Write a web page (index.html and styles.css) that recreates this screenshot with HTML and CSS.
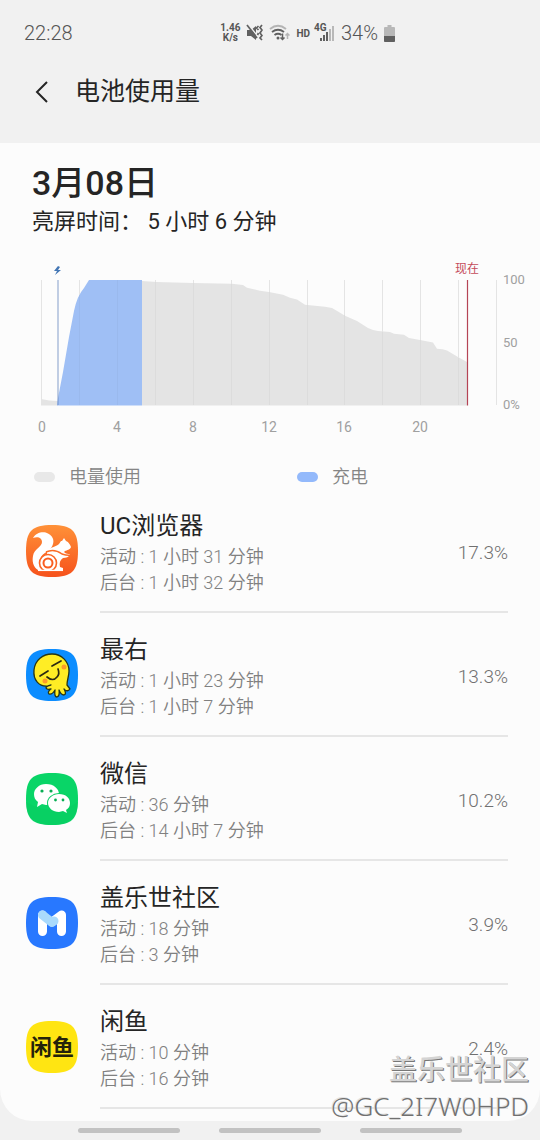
FILE: index.html
```html
<!DOCTYPE html>
<html lang="zh-CN">
<head>
<meta charset="utf-8">
<meta name="viewport" content="width=device-width, initial-scale=1">
<title>电池使用量</title>
<link rel="stylesheet" href="styles.css">
</head>
<body>
<div class="screen">
  <div class="status">
    <span class="clock">22:28</span>
    <div class="indicators">
      <span class="speed">1.46<br>K/s</span>
      <svg viewBox="0 0 17 18" width="17" height="18">
        <path d="M1 6h4l5-4v14l-5-4H1z" fill="#606060"/>
        <path d="M2 0l11 14" stroke="#f1f1f1" stroke-width="1.500"/>
        <path d="M1 1l10 13" stroke="#606060" stroke-width="1.700"/>
        <path d="M12.500 2l-2 2 2 2M16 1l-2 2.500 2 2.500-2 3 2 2.500-2 2.500 2 2M12.500 9l-1 2" fill="none" stroke="#606060" stroke-width="1.700"/>
      </svg>
      <svg viewBox="0 0 21 18" width="21" height="18">
        <g fill="none" stroke-width="1.900">
          <path d="M1 5q8-6.500 16 0" stroke="#b4b4b4"/>
          <path d="M3 8q6-4.500 12 0M5.500 11q3.500-2.500 7 0" stroke="#606060"/>
          <path d="M13.500 9.500v6M11.500 13.500l2 2 2-2" stroke="#606060" stroke-width="1.500"/>
          <path d="M18.500 15V9.500M16.500 11.500l2-2 2 2" stroke="#b4b4b4" stroke-width="1.500"/>
        </g>
        <circle cx="9" cy="14" r="1.500" fill="#606060"/>
      </svg>
      <span class="hd">HD</span>
      <span class="signal">
        <svg viewBox="0 0 19 18" width="19" height="18">
          <path d="M4 14h2v3H4zM7 11h2v6H7zM10 8h2v9h-2z" fill="#606060"/>
          <path d="M13 5h2v12h-2zM16 2h2v15h-2z" fill="#b8b8b8"/>
        </svg>
        <span class="net">4G</span>
      </span>
      <span class="level">34%</span>
      <svg viewBox="0 0 11 17" width="11" height="17">
        <path d="M3.500 0h4v2H10q1 0 1 1v13q0 1-1 1H1q-1 0-1-1V3q0-1 1-1h2.500z" fill="#b8b8b8"/>
        <path d="M0 11h11v5q0 1-1 1H1q-1 0-1-1z" fill="#606060"/>
      </svg>
    </div>
  </div>

  <header class="appbar">
    <button class="back" type="button" aria-label="返回">
      <svg viewBox="0 0 14 22" width="14" height="22"><path d="M12 1L2 11l10 10" fill="none" stroke="#252525" stroke-width="2"/></svg>
    </button>
    <h1>电池使用量</h1>
  </header>

  <main class="card">
    <h2>3月08日</h2>
    <p class="summary">亮屏时间： 5 小时 6 分钟</p>

    <svg class="chart" viewBox="0 0 540 185" role="img" aria-label="电量图表">
      <path class="grid" d="M41.500 25v125M79.500 25v125M117.500 25v125M155.500 25v125M193.500 25v125M231.500 25v125M269.500 25v125M307.500 25v125M344.500 25v125M382.500 25v125M420.500 25v125M458.500 25v125M496.500 25v125"/>
      <path class="usage" d="M41 144q8 2 17 2V150.500H41zM142 26L157 27 193 28 232 28.700 243 30 247 32.700 260 35.700 269 37 283 39.700 290 42.700 297 44.500 305 49.700 325 51.700 332 53 338 56.500 345 60.700 357 66 368 73Q373 75.500 378 76L390 77 394 78.700 404 79.700 409 83 420 85 433 87.500 437 93.700Q443 94 447 95.500L458 102 467 107V150.500H142z"/>
      <path class="charge" d="M57 150.500l1-7.500 5-26 6-35 5-26q3-15 10-23l5-8h53v125.500z"/>
      <path class="grid over" d="M79.500 40v110M117.500 25v125M155.500 27v123M193.500 28v122M231.500 29v121M269.500 37v113M307.500 50v100M344.500 60v90M382.500 77v73M420.500 85v65M458.500 103v47"/>
      <path d="M58 25v125" stroke="#6788bd" stroke-opacity=".4" stroke-width="2"/>
      <path d="M467.500 25v125.500" stroke="#b54455" stroke-width="1.200"/>
      <path d="M58 11l-4 5h3l-2 4 6-5h-3l2-3z" fill="#4477b5"/>
      <g class="axis">
        <text x="42" y="177">0</text><text x="117" y="177">4</text><text x="193" y="177">8</text>
        <text x="269" y="177">12</text><text x="344" y="177">16</text><text x="420" y="177">20</text>
      </g>
      <g class="axis scale">
        <text x="503" y="29">100</text><text x="503" y="92">50</text><text x="503" y="154">0%</text>
      </g>
      <text class="now" x="467" y="18">现在</text>
    </svg>

    <div class="legend">
      <span class="key"><i class="swatch"></i>电量使用</span>
      <span class="key"><i class="swatch blue"></i>充电</span>
    </div>

    <ul class="apps">
      <li>
        <svg class="logo" viewBox="0 0 52 52">
          <defs><linearGradient id="uc" x2="0" y2="1"><stop stop-color="#ff9138"/><stop offset="1" stop-color="#f6521c"/></linearGradient></defs>
          <path d="M26 0C46 0 52 6 52 26S46 52 26 52 0 46 0 26 6 0 26 0Z" fill="url(#uc)"/>
          <path d="M7 13C10 7 18 6 22 8.500c6 3 7 9 3 14.500-3 4-8 5-10 9-2 4-1 9 3 13H12C7 42 6 36 7 31c1-7 9-9 9-14 0-4-4-6-9-4Z" fill="#fff"/>
          <path d="M21 26C24 22 30 22 33 19l2-3 1 0 2-3 2 3c3 1 4 4 5 6-1 3-4 3-6 4l-1 1c2 2 4 2 6 2-1 3-4 4-7 4-3 2-4 5-3 9l3 1v2H15Q22 34 21 26Z" fill="#fff"/>
          <path d="M20 27c6-3 12-1 16 2 3 1 6 2 9 1" fill="none" stroke="#fb6c27" stroke-width="1.500"/>
          <circle cx="22" cy="38" r="8.500" fill="#fff" stroke="#fb6524" stroke-width="1.600"/>
          <circle cx="22" cy="38" r="4.500" fill="#fff" stroke="#fa5d20" stroke-width="2"/>
          <path d="M12 45.500h25" stroke="#fff" stroke-width="1.500"/>
          <path d="M12 47h25" stroke="#f7571e" stroke-width="1.500"/>
        </svg>
        <div class="info"><h3>UC浏览器</h3><p>活动 : 1 小时 31 分钟</p><p>后台 : 1 小时 32 分钟</p></div>
        <span class="pct">17.3%</span>
      </li>
      <li>
        <svg class="logo" viewBox="0 0 52 52">
          <path d="M26 0C46 0 52 6 52 26S46 52 26 52 0 46 0 26 6 0 26 0Z" fill="#0c8dff"/>
          <path d="M22 37C13 38 7 31 8 21 9 11 17 5 26 5c10 0 17 8 17 17 0 5-2 9-2 14l3 4q-2 3-5 1l-1-1q3 5 0 6-3 0-5-5 1 6-2 7-3 0-2-7-3 5-6 4-2-2 2-5-4 1-5-1 0-2 5-3Z" fill="#ffed25" stroke="#263516" stroke-width="1.300" stroke-linejoin="round"/>
          <circle cx="19" cy="32" r="2.500" fill="#ff9c29"/><circle cx="38" cy="18" r="2.500" fill="#ff9c29"/>
          <path d="M14 27l8-5M26 17l9-5M21 28q6 5 10 0 3-3 1-8" fill="none" stroke="#2c2a12" stroke-width="1.700" stroke-linecap="round"/>
        </svg>
        <div class="info"><h3>最右</h3><p>活动 : 1 小时 23 分钟</p><p>后台 : 1 小时 7 分钟</p></div>
        <span class="pct">13.3%</span>
      </li>
      <li>
        <svg class="logo" viewBox="0 0 52 52">
          <path d="M26 0C46 0 52 6 52 26S46 52 26 52 0 46 0 26 6 0 26 0Z" fill="#09d567"/>
          <path d="M0 29q0 23 26 23t26-23q-24 16-52 0Z" fill="#08c960" opacity=".45"/>
          <path d="M20 11c8 0 13 5 13 10 0 6-6 11-13 11l-4-1-5 3 1-5c-3-2-4-5-4-8 0-5 5-10 12-10Z" fill="#fff"/>
          <ellipse cx="33" cy="30" rx="12" ry="10" fill="#09cf64"/>
          <path d="M33 21c7 0 11 4 11 9 0 3-1 5-4 7l1 3-4-2-4 1c-6 0-11-4-11-9 0-5 5-9 11-9Z" fill="#fff"/>
          <g fill="#08ae53"><circle cx="16" cy="18" r="1.600"/><circle cx="25" cy="18" r="1.600"/><circle cx="29.500" cy="27" r="1.400"/><circle cx="37" cy="27" r="1.400"/></g>
        </svg>
        <div class="info"><h3>微信</h3><p>活动 : 36 分钟</p><p>后台 : 14 小时 7 分钟</p></div>
        <span class="pct">10.2%</span>
      </li>
      <li>
        <svg class="logo" viewBox="0 0 52 52">
          <path d="M26 0C46 0 52 6 52 26S46 52 26 52 0 46 0 26 6 0 26 0Z" fill="#2878ff"/>
          <g fill="none" stroke-width="9" stroke-linecap="round" stroke-linejoin="round"><path d="M16.500 18v16.500M26 25l9.500-7v16.500" stroke="#fff"/><path d="M16.500 18l9.500 7.500 2-1.500" stroke="#a9dafc"/></g>
        </svg>
        <div class="info"><h3>盖乐世社区</h3><p>活动 : 18 分钟</p><p>后台 : 3 分钟</p></div>
        <span class="pct">3.9%</span>
      </li>
      <li>
        <svg class="logo" viewBox="0 0 52 52">
          <path d="M26 0C46 0 52 6 52 26S46 52 26 52 0 46 0 26 6 0 26 0Z" fill="#ffe512"/>
          <text class="fish" x="26" y="34">闲鱼</text>
        </svg>
        <div class="info"><h3>闲鱼</h3><p>活动 : 10 分钟</p><p>后台 : 16 分钟</p></div>
        <span class="pct">2.4%</span>
      </li>
    </ul>
  </main>

  <div class="navhints"><i></i><i></i><i></i></div>
  <div class="watermark"><b>盖乐世社区</b><span>@GC_2I7W0HPD</span></div>
</div>
</body>
</html>
```

FILE: styles.css
```css
* { box-sizing: border-box; }
body {
  margin: 0;
  background: #f1f1f1;
  color: #252525;
  font-family: Roboto, "Noto Sans CJK SC", sans-serif;
}
h1, h2, h3, p, ul { margin: 0; padding: 0; font-weight: 400; }
svg { display: block; flex: none; }
.screen { position: relative; }

.status {
  display: flex;
  align-items: center;
  justify-content: space-between;
  height: 66px;
  padding: 0 145px 0 24px;
  color: #555;
  font-size: 20px;
  font-weight: 300;
}
.indicators { display: flex; align-items: center; gap: 6px; }
.speed { font-size: 10px; font-weight: 700; line-height: 10px; text-align: center; }
.hd { font-size: 10px; font-weight: 700; }
.signal { position: relative; }
.net { position: absolute; left: -2px; top: -1px; font-size: 10px; font-weight: 700; line-height: 10px; }

.appbar { display: flex; align-items: center; height: 77px; padding: 0 32px 25px; }
.back { display: flex; width: 43px; padding: 0 3px; border: 0; background: none; }
.appbar h1 { font-size: 25px; line-height: 36px; }

.card { padding-bottom: 12px; border-radius: 0 0 32px 32px; background: #fcfcfc; overflow: hidden; }
.card h2 { padding: 20px 32px 0; font-size: 34px; font-weight: 500; line-height: 40px; }
.summary { padding: 1px 32px 0; font-size: 22px; line-height: 36px; }

.chart { width: 100%; height: auto; margin-top: 15px; }
.grid { stroke: #e4e4e4; stroke-width: 1; }
.over { stroke: #000; stroke-opacity: .03; }
.usage { fill: #e4e4e4; }
.charge { fill: #9fbff5; }
.axis { fill: #a0a0a0; font-size: 14px; text-anchor: middle; }
.scale { font-size: 13px; text-anchor: start; }
.now { fill: #c44b5a; font-size: 12px; text-anchor: middle; }

.legend { display: grid; grid-template-columns: 263px 1fr; padding: 22px 34px 0; color: #858585; font-size: 18px; font-weight: 350; line-height: 30px; }
.key { display: flex; align-items: center; gap: 14px; }
.swatch { width: 21px; height: 10px; border-radius: 5px; background: #e8e8e8; }
.swatch.blue { background: #93b9fb; }

.apps { list-style: none; }
.apps li { display: flex; align-items: center; height: 124px; padding: 0 32px 0 26px; }
.apps li:first-child { margin-top: -3px; }
.logo { width: 52px; height: 52px; margin-right: 22px; }
.info { flex: 1; height: 124px; padding-top: 20px; border-bottom: 2px solid #e6e6e6; }
.info h3 { font-size: 24px; line-height: 35px; }
.info p { color: #808080; font-size: 18px; font-weight: 350; line-height: 26px; }
.pct { align-self: stretch; display: flex; align-items: center; padding-top: 4px; border-bottom: 2px solid #e6e6e6; color: #707070; font-size: 19px; font-weight: 300; }
.fish { fill: #25220a; font-size: 22px; font-weight: 700; text-anchor: middle; }

.navhints { display: flex; justify-content: center; gap: 39px; padding-top: 7px; }
.navhints i { width: 102px; height: 5px; border-radius: 3px; background: #c2c2c2; }

.watermark {
  position: absolute;
  right: 11px;
  bottom: 8px;
  display: flex;
  flex-direction: column;
  align-items: flex-end;
  color: #707070;
  font-family: "Noto Sans", "Noto Sans CJK SC", sans-serif;
  font-size: 26px;
  font-weight: 300;
  line-height: 37px;
  text-shadow: -1px -1px 0 #e4e4e4;
}
.watermark b { color: #d4d4d4; font-size: 28px; font-weight: 500; text-shadow: 1px 1px 0 #777; }
```
